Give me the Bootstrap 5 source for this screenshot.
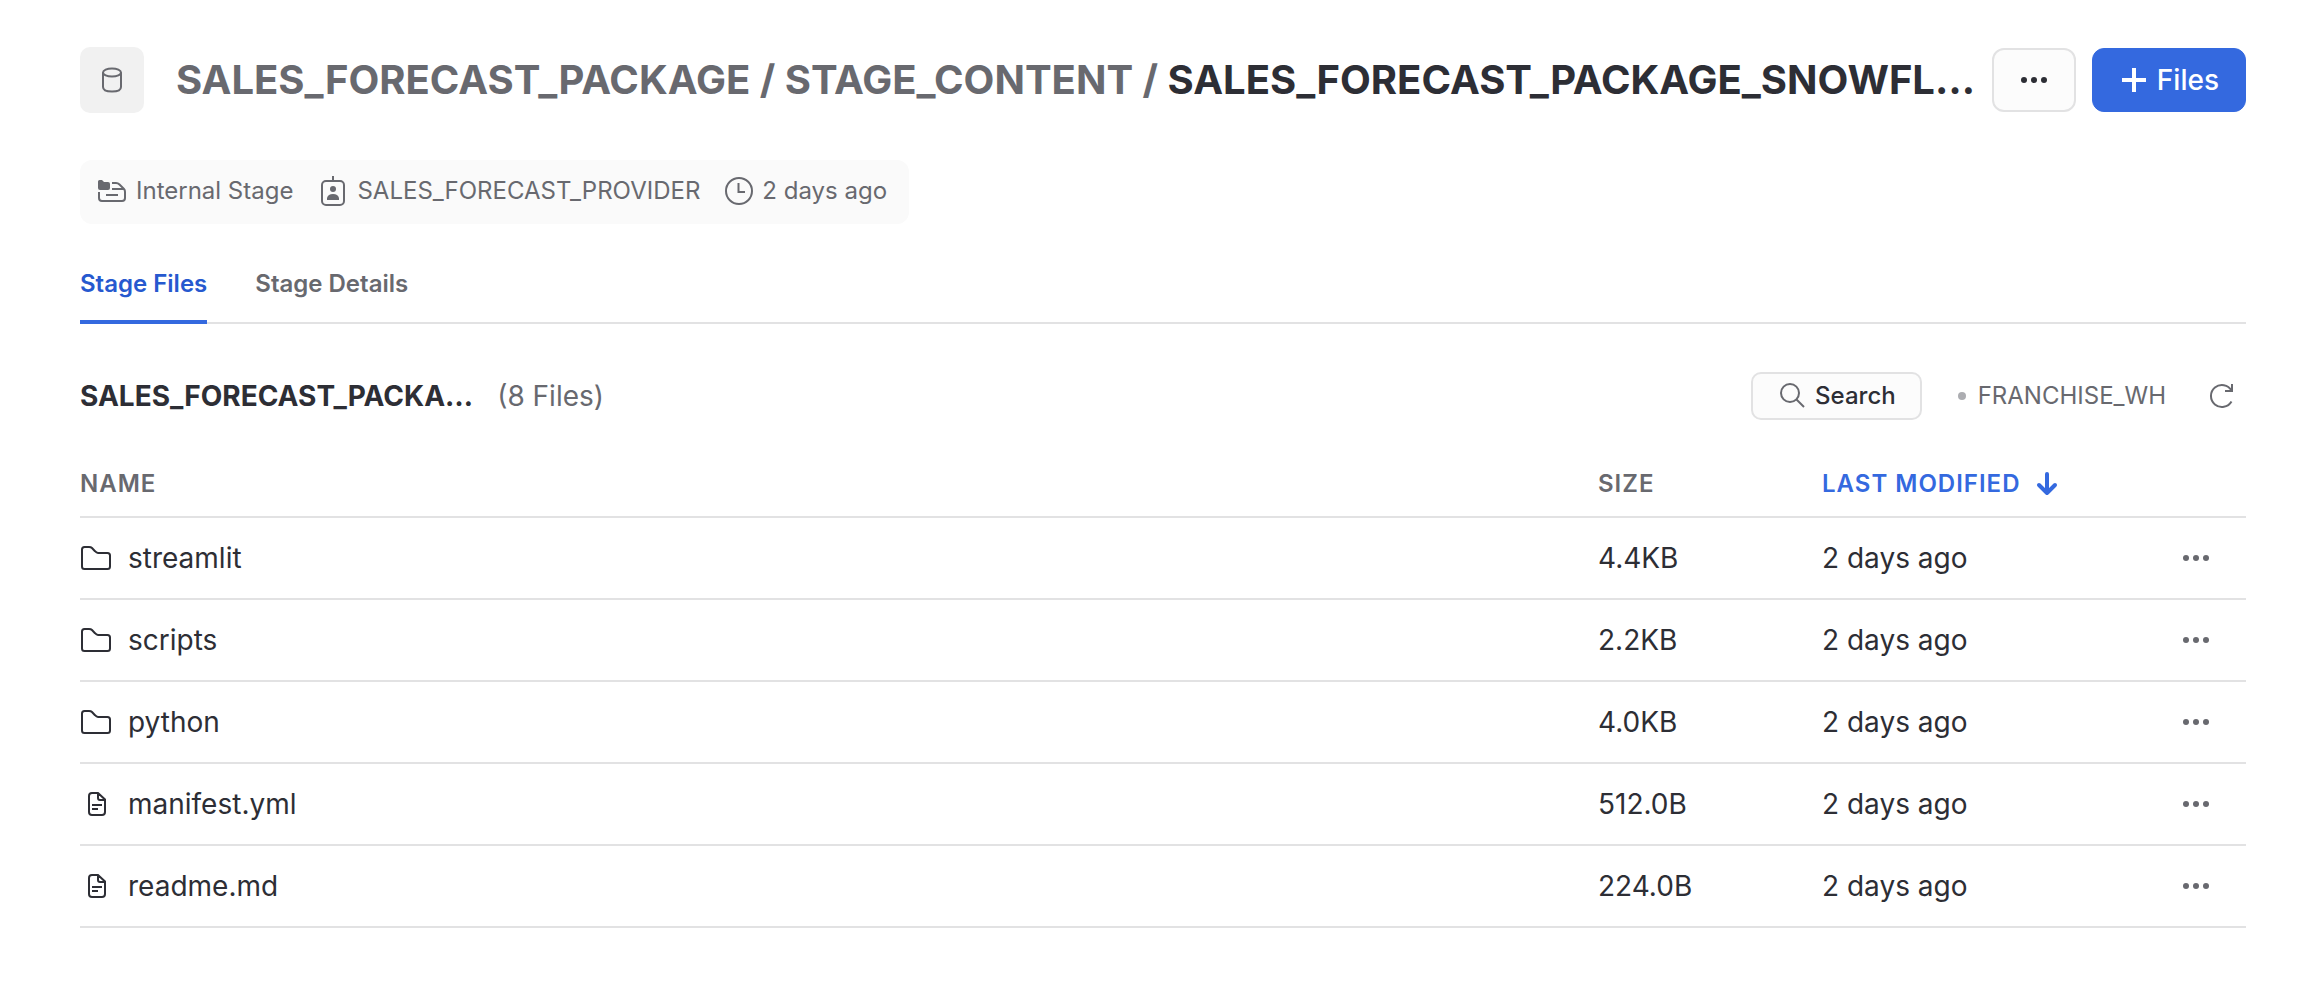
<!DOCTYPE html>
<html lang="en">
<head>
<meta charset="utf-8">
<meta name="viewport" content="width=device-width, initial-scale=1">
<title>Stage Files</title>
<link href="https://cdn.jsdelivr.net/npm/bootstrap@5.3.0/dist/css/bootstrap.min.css" rel="stylesheet">
<style>
  :root { --ink: #2d2e35; --muted: #68696f; --line: #e2e2e3; --blue: #3469df; }
  body { font-family: Inter, "Liberation Sans", sans-serif; font-size: 24px; line-height: 32px; color: var(--ink); background: #fff; }
  svg { display: block; flex: none; fill: none; stroke: currentColor; stroke-width: 2; }
  .stage-page { padding: 47px 62px 72px 80px; }
  .ink-muted { color: var(--muted); }
  .stage-icon { width: 64px; height: 66px; border-radius: 10px; background: #f1f1f1; color: var(--muted); }
  .stage-title { font-size: 40px; line-height: 48px; font-weight: 700; }
  .stage-title a { color: var(--muted); text-decoration: none; }
  .btn-stage { --bs-btn-color: var(--ink); --bs-btn-bg: #fcfcfc; --bs-btn-border-color: var(--line); --bs-btn-hover-bg: #f3f3f4; --bs-btn-hover-border-color: var(--line); border-width: 2px; border-radius: 12px; padding: 0; }
  .btn-more { width: 84px; height: 64px; }
  .btn-files { --bs-btn-color: #fff; --bs-btn-bg: var(--blue); --bs-btn-border-color: var(--blue); --bs-btn-hover-color: #fff; --bs-btn-hover-bg: #2858c5; height: 64px; padding: 0 26px; border-radius: 12px; font-size: 28px; font-weight: 500; }
  .btn-find { height: 48px; padding: 0 24px; font-size: 24px; font-weight: 500; border-radius: 10px; }
  .btn-bare { display: block; border: 0; padding: 0; background: none; color: var(--muted); font-size: 24px; }
  .btn-wh { margin-left: 36px; gap: 12px; }
  .btn-reload { margin: 0 10px 0 42px; }
  .meta-bar { height: 64px; margin-top: 47px; padding: 0 22px 2px 16px; gap: 24px; border-radius: 12px; background: #fafafa; color: var(--muted); }
  .meta-bar .meta-item { gap: 8px; }
  .stage-tabs { gap: 48px; margin-top: 32px; border-bottom: 2px solid var(--line); }
  .stage-tabs .nav-link { padding: 12px 0 20px; margin-bottom: -2px; border-bottom: 4px solid transparent; font-weight: 600; color: var(--muted); }
  .stage-tabs .nav-link.active { color: #2659cf; border-color: var(--blue); }
  .list-head { margin-top: 48px; }
  .list-title { font-size: 28px; line-height: 36px; font-weight: 700; }
  .list-count { font-size: 28px; line-height: 36px; }
  .wh-dot { width: 8px; height: 8px; background: #acadb1; }
  .files-table { --bs-table-color: var(--ink); --bs-table-bg: transparent; table-layout: fixed; margin-top: 29px; font-size: 28px; }
  .files-table > :not(caption) > * > * { padding: 0; border-bottom: 2px solid var(--line); vertical-align: middle; }
  .files-table > thead > tr > th { height: 68px; padding-top: 2px; font-size: 24px; font-weight: 600; letter-spacing: 1px; color: var(--muted); }
  .files-table td { height: 82px; }
  .files-table > thead > tr > th.sorted { color: var(--blue); }
  .files-table th button { font: inherit; letter-spacing: inherit; color: inherit; gap: 16px; }
  .col-size { width: 224px; }
  .col-date { width: 360px; }
  .col-act { width: 64px; }
  .file-link { gap: 16px; color: var(--ink); text-decoration: none; }
</style>
</head>
<body>
<svg class="d-none" xmlns="http://www.w3.org/2000/svg">
  <symbol id="dots" viewBox="0 0 28 8"><g fill="currentColor" stroke="none"><circle cx="4" cy="4" r="3"/><circle cx="14" cy="4" r="3"/><circle cx="24" cy="4" r="3"/></g></symbol>
  <symbol id="folder" viewBox="0 0 32 26"><path d="M2 4.500Q2 2 4.500 2H9Q11 2 12 3L15 6.200Q16.500 8 18 8H27.500Q30 8 30 10.500V21.500Q30 24 27.500 24H4.500Q2 24 2 21.500Z"/></symbol>
  <symbol id="doc" viewBox="0 0 32 26"><path d="M9 5Q9 2 12 2H18L25 8.500V21Q25 24 22 24H12Q9 24 9 21ZM18 2V7Q18 9 20 9H25M12 14H22M12 18H18"/></symbol>
</svg>
<main class="stage-page container-fluid">
  <header class="d-flex align-items-center">
    <div class="stage-icon d-flex align-items-center justify-content-center flex-shrink-0">
      <svg width="24" height="26" viewBox="0 0 24 26"><ellipse cx="12" cy="5.500" rx="9" ry="4"/><path d="M3 5.500V20C3 22.500 6 24.500 12 24.500S21 22.500 21 20V5.500"/></svg>
    </div>
    <h1 class="stage-title text-truncate flex-grow-1 mb-0 ms-4 ps-2"><a href="#">SALES_FORECAST_PACKAGE</a> <span class="ink-muted">/</span> <a href="#">STAGE_CONTENT</a> <span class="ink-muted">/</span> SALES_FORECAST_PACKAGE_SNOWFL…</h1>
    <div class="d-flex gap-3 flex-shrink-0">
      <button type="button" class="btn btn-stage btn-more d-flex align-items-center justify-content-center" aria-label="More actions"><svg width="28" height="8"><use href="#dots"/></svg></button>
      <button type="button" class="btn btn-files d-flex align-items-center gap-2"><svg width="30" height="30" viewBox="0 0 30 30"><path d="M15 3V27M3 15H27" stroke-width="4"/></svg>Files</button>
    </div>
  </header>

  <div class="meta-bar d-inline-flex align-items-center">
    <span class="meta-item d-flex align-items-center">
      <svg width="32" height="32" viewBox="0 0 32 32"><path d="M2 6.500Q2 5 3.500 5H6L8 7H12Q14 7 14 9V13Q14 15 12 15H4Q2 15 2 13Z" fill="currentColor" stroke="none"/><path d="M16 8H20Q22 8 23.500 9.500L28 14Q29 15 29 17V23Q29 26 26 26H6Q3 26 3 23V17M16 14H28M10 20H22"/></svg>
      Internal Stage</span>
    <span class="meta-item d-flex align-items-center">
      <svg width="32" height="32" viewBox="-2 0 32 32"><rect x="3" y="6" width="22" height="24" rx="4"/><path d="M14 1V7"/><g fill="currentColor" stroke="none"><circle cx="14" cy="14" r="3"/><path d="M8 25V23Q9 19 14 19T20 23V25Z"/></g></svg>
      SALES_FORECAST_PROVIDER</span>
    <span class="meta-item d-flex align-items-center">
      <svg width="30" height="30" viewBox="0 0 30 30"><circle cx="15" cy="15" r="13"/><path d="M14.500 7V16H21"/></svg>
      2 days ago</span>
  </div>

  <nav class="nav stage-tabs" aria-label="Stage sections">
    <a class="nav-link active" aria-current="page" href="#">Stage Files</a>
    <a class="nav-link" href="#">Stage Details</a>
  </nav>

  <section class="list-head d-flex align-items-center">
    <h2 class="list-title mb-0">SALES_FORECAST_PACKA…</h2>
    <span class="list-count ink-muted ms-4">(8 Files)</span>
    <div class="ms-auto d-flex align-items-center">
      <button type="button" class="btn btn-stage btn-find d-flex align-items-center gap-2"><svg class="ink-muted" width="30" height="30" viewBox="0 0 30 30"><circle cx="13" cy="12" r="9"/><path d="M19.500 18.500L27 26"/></svg>Search</button>
      <button type="button" class="btn-bare btn-wh d-flex align-items-center"><span class="wh-dot rounded-circle"></span>FRANCHISE_WH</button>
      <button type="button" class="btn-bare btn-reload" aria-label="Refresh"><svg width="28" height="28" viewBox="0 0 28 28"><path d="M23.500 19.500A11 11 0 1 1 23.500 8.500M24 2V9H17"/></svg></button>
    </div>
  </section>

  <table class="table files-table mb-0">
    <colgroup><col><col class="col-size"><col class="col-date"><col class="col-act"></colgroup>
    <thead>
      <tr><th scope="col">NAME</th><th scope="col">SIZE</th><th scope="col" class="sorted" aria-sort="descending"><button type="button" class="btn-bare d-flex align-items-center">LAST MODIFIED<svg width="22" height="24" viewBox="0 0 22 24"><path d="M11 2V21M3 13L11 21L19 13" stroke-width="4" stroke-linecap="round" stroke-linejoin="round"/></svg></button></th><th scope="col" aria-label="Actions"></th></tr>
    </thead>
    <tbody>
      <tr><td><a class="file-link d-flex align-items-center" href="#"><svg width="32" height="26"><use href="#folder"/></svg>streamlit</a></td><td>4.4KB</td><td>2 days ago</td><td><button type="button" class="btn-bare" aria-label="Actions for streamlit"><svg width="28" height="8"><use href="#dots"/></svg></button></td></tr>
      <tr><td><a class="file-link d-flex align-items-center" href="#"><svg width="32" height="26"><use href="#folder"/></svg>scripts</a></td><td>2.2KB</td><td>2 days ago</td><td><button type="button" class="btn-bare" aria-label="Actions for scripts"><svg width="28" height="8"><use href="#dots"/></svg></button></td></tr>
      <tr><td><a class="file-link d-flex align-items-center" href="#"><svg width="32" height="26"><use href="#folder"/></svg>python</a></td><td>4.0KB</td><td>2 days ago</td><td><button type="button" class="btn-bare" aria-label="Actions for python"><svg width="28" height="8"><use href="#dots"/></svg></button></td></tr>
      <tr><td><a class="file-link d-flex align-items-center" href="#"><svg width="32" height="26"><use href="#doc"/></svg>manifest.yml</a></td><td>512.0B</td><td>2 days ago</td><td><button type="button" class="btn-bare" aria-label="Actions for manifest.yml"><svg width="28" height="8"><use href="#dots"/></svg></button></td></tr>
      <tr><td><a class="file-link d-flex align-items-center" href="#"><svg width="32" height="26"><use href="#doc"/></svg>readme.md</a></td><td>224.0B</td><td>2 days ago</td><td><button type="button" class="btn-bare" aria-label="Actions for readme.md"><svg width="28" height="8"><use href="#dots"/></svg></button></td></tr>
    </tbody>
  </table>
</main>
<script src="https://cdn.jsdelivr.net/npm/bootstrap@5.3.0/dist/js/bootstrap.bundle.min.js"></script>
</body>
</html>
